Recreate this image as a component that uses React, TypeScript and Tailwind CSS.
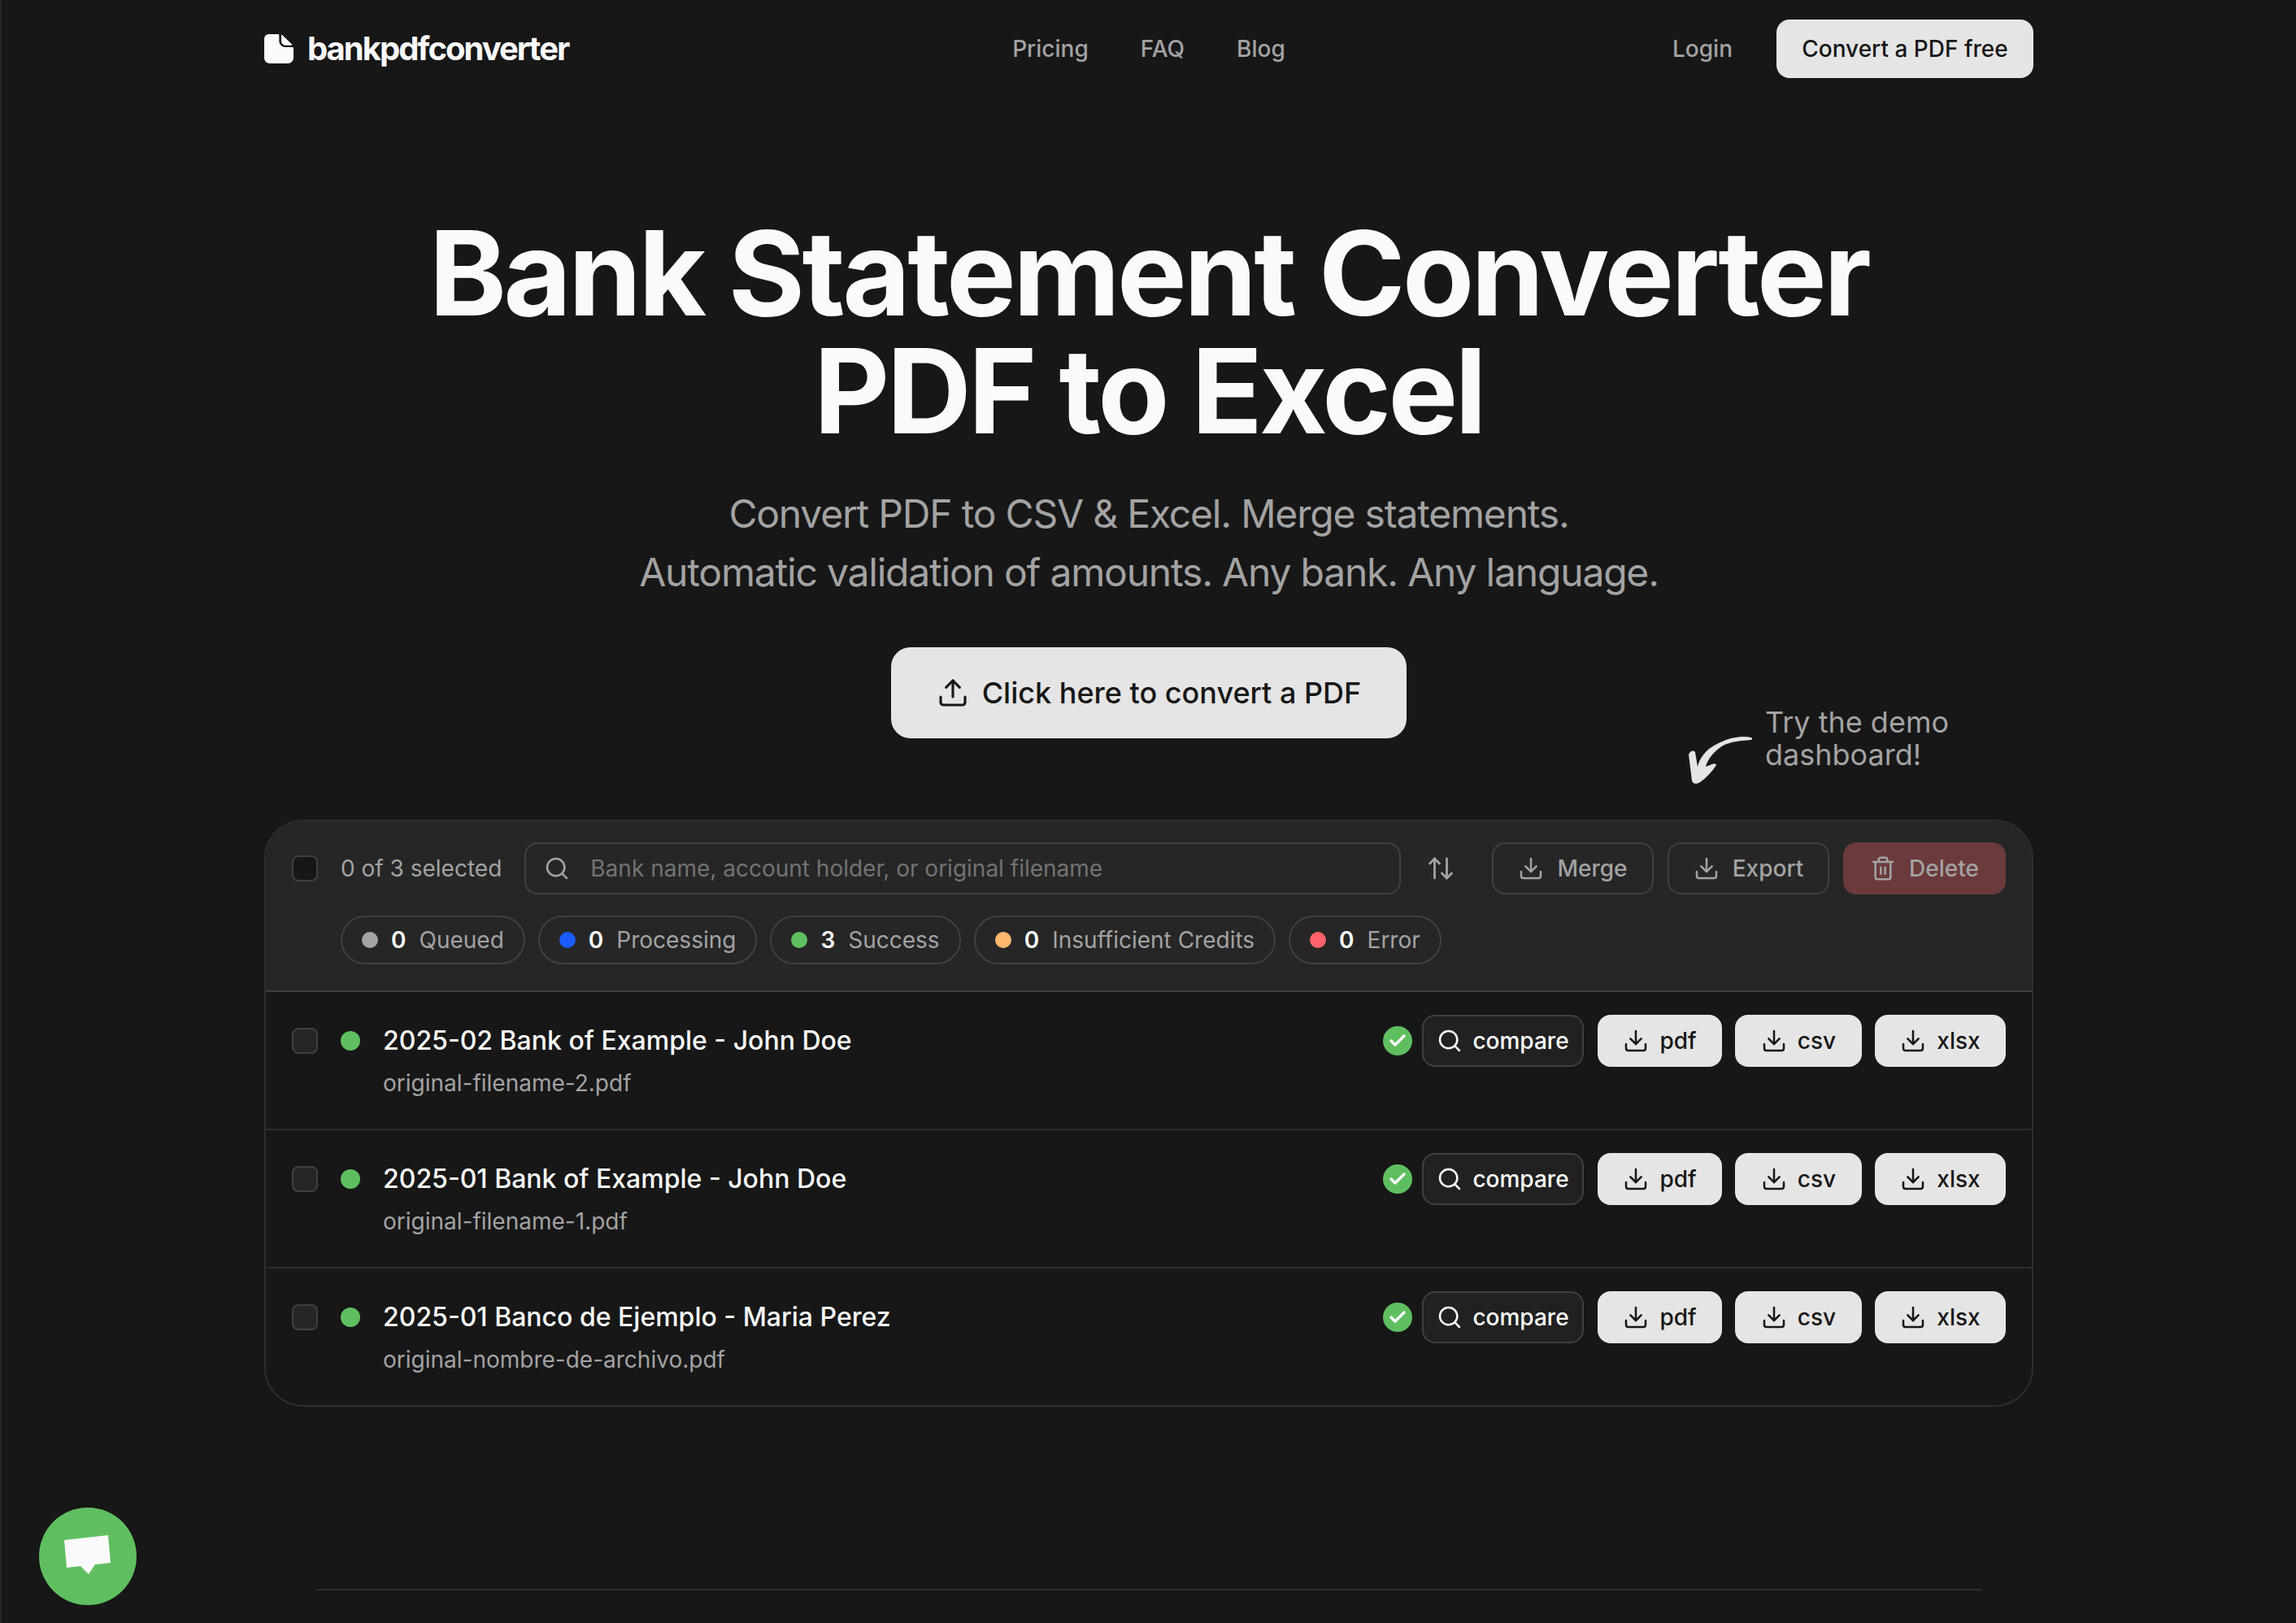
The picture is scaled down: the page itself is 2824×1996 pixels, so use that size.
import { ArrowUpDown, Check, Download, Search, Trash2, Upload } from "lucide-react";

const statuses = [
	{ label: "Queued", count: 0, dot: "bg-[#a3a3a3]" },
	{ label: "Processing", count: 0, dot: "bg-[#1a5cff]" },
	{ label: "Success", count: 3, dot: "bg-[#5fbf60]" },
	{ label: "Insufficient Credits", count: 0, dot: "bg-[#ffb86c]" },
	{ label: "Error", count: 0, dot: "bg-[#ff6369]" },
];

const files = [
	{ title: "2025-02 Bank of Example - John Doe", name: "original-filename-2.pdf" },
	{ title: "2025-01 Bank of Example - John Doe", name: "original-filename-1.pdf" },
	{ title: "2025-01 Banco de Ejemplo - Maria Perez", name: "original-nombre-de-archivo.pdf" },
];

function LogoIcon() {
	return (
		<svg width="36" height="36" viewBox="0 0 36 36" fill="#fafafa">
			<path d="M6 0h11c.8 0 1.3.6 1.3 1.4V8c0 4.6 3.4 8 8 8h8.3c.8 0 1.4.6 1.4 1.4V29c0 4-3 7-7 7H7c-4 0-7-3-7-7V6c0-3.400 2.600-6 6-6Z" />
			<path d="M21 1.500c0-.6.7-.9 1.100-.5l12 11.600c.4.400.1 1.100-.5 1.100H26.500c-3.200 0-5.500-2.300-5.500-5.500Z" />
		</svg>
	);
}

function HandArrow() {
	return (
		<svg width="100" height="80" viewBox="0 0 100 80" fill="#e5e5e5">
			<path d="M95 19C80 16 62 20 43 33 36 39 31 46 29 55L26 37C25 35 20 34 18 40L22 72C23 76 27 77 32 74 39 69 46 62 52 53 51 50 48 51 39 55 41 46 49 36 60 29 70 24 82 23 94 22 96 22 97 20 95 19Z" />
		</svg>
	);
}

function ChatBubble() {
	return (
		<svg width="60" height="52" viewBox="0 0 60 52" fill="#fafafa">
			<path d="M1 6 55 0 58 34 39 36 31 48 21 38 4 40Z" />
		</svg>
	);
}

function ToolbarButton({ label }: { label: string }) {
	return (
		<button className="h-16 w-[199px] flex items-center justify-center gap-4 rounded-2xl border-2 border-[#404040] text-[28px] font-medium text-[#a3a3a3]">
			<Download size={32} strokeWidth={1.9} />
			{label}
		</button>
	);
}

function LightButton({ label, width }: { label: string; width: string }) {
	return (
		<button className={`h-16 ${width} flex items-center justify-center gap-[13px] rounded-2xl bg-[#e5e5e5] text-[28px] font-medium text-[#171717]`}>
			<Download size={32} strokeWidth={1.9} />
			{label}
		</button>
	);
}

export default function App() {
	return (
		<div className="relative min-h-screen bg-[#171717] border-l-2 border-[#262626] font-['Inter',sans-serif] text-[#a3a3a3] overflow-hidden">
			<nav className="mx-auto w-[2176px] h-[120px] grid grid-cols-3 items-center">
				<div className="flex items-center gap-[17px]">
					<LogoIcon />
					<span className="text-[40px] font-bold tracking-[-0.05em] text-[#fafafa]">bankpdfconverter</span>
				</div>
				<div className="flex justify-center gap-16 text-[28px] font-medium">
					<a>Pricing</a>
					<a>FAQ</a>
					<a>Blog</a>
				</div>
				<div className="flex items-center justify-end gap-[54px] text-[28px] font-medium">
					<a>Login</a>
					<button className="h-[72px] w-[316px] rounded-2xl bg-[#e5e5e5] text-[#171717]">Convert a PDF free</button>
				</div>
			</nav>

			<main className="relative flex flex-col items-center pt-[143px]">
				<h1 className="text-[144px] leading-[145px] font-bold tracking-[-0.025em] text-[#fafafa] text-center">
					Bank Statement Converter
					<br />
					PDF to Excel
				</h1>
				<p className="mt-[43px] text-[48px] leading-[72px] tracking-[-0.025em] text-center">
					Convert PDF to CSV &amp; Excel. Merge statements.
					<br />
					Automatic validation of amounts. Any bank. Any language.
				</p>
				<button className="mt-[56px] h-[112px] w-[634px] flex items-center justify-center gap-4 rounded-3xl bg-[#e5e5e5] text-[36px] font-medium text-[#171717]">
					<Upload size={40} strokeWidth={1.9} />
					Click here to convert a PDF
				</button>

				<div className="absolute left-[2057px] top-[768px] flex items-start">
					<HandArrow />
					<p className="ml-[12px] -mt-[20px] text-[36px] leading-[40px]">
						Try the demo
						<br />
						dashboard!
					</p>
				</div>

				<section className="mt-[100px] w-[2176px] rounded-[48px] border-2 border-[#2e2e2e] overflow-hidden">
					<header className="bg-[#262626] border-b-2 border-[#404040] pl-[32px] pr-[32px] pt-[26px] pb-[32px]">
						<div className="flex items-center h-16">
							<div className="h-8 w-8 rounded-lg bg-[#171717] border-2 border-[#404040]" />
							<span className="ml-[28px] text-[28px] whitespace-nowrap">0 of 3 selected</span>
							<div className="ml-[28px] h-16 flex-1 flex items-center rounded-2xl border-2 border-[#404040] pl-[22px]">
								<Search size={32} strokeWidth={1.9} />
								<span className="ml-[25px] text-[28px] text-[#737373]">Bank name, account holder, or original filename</span>
							</div>
							<div className="ml-[25px] mr-[39px] w-12 flex justify-center">
								<ArrowUpDown size={36} strokeWidth={1.9} />
							</div>
							<div className="flex items-center gap-[17px]">
								<ToolbarButton label="Merge" />
								<ToolbarButton label="Export" />
								<button className="h-16 w-[200px] flex items-center justify-center gap-4 rounded-2xl bg-[#6b3a3a] text-[28px] font-medium text-[#a3a3a3]">
									<Trash2 size={32} strokeWidth={1.9} />
									Delete
								</button>
							</div>
						</div>
						<div className="mt-[26px] ml-[60px] flex gap-4">
							{statuses.map((s) => (
								<div key={s.label} className="h-[60px] flex items-center rounded-full border-2 border-[#404040] px-[24px] text-[28px]">
									<span className={`h-5 w-5 rounded-full ${s.dot}`} />
									<span className="ml-4 font-semibold text-[#fafafa]">{s.count}</span>
									<span className="ml-4">{s.label}</span>
								</div>
							))}
						</div>
					</header>

					{files.map((f, i) => (
						<div key={f.name} className={`flex items-start pl-[32px] pr-[32px] pt-[28px] ${i < files.length - 1 ? "h-[170px] border-b-2 border-[#2e2e2e]" : "h-[168px]"}`}>
							<div className="h-16 flex items-center">
								<div className="h-8 w-8 rounded-lg bg-[#262626] border-2 border-[#404040]" />
								<span className="ml-[28px] h-6 w-6 rounded-full bg-[#5fbf60]" />
							</div>
							<div className="ml-[28px] flex-1">
								<div className="text-[32px] leading-[64px] font-medium text-[#fafafa]">{f.title}</div>
								<div className="text-[28px] leading-[40px] text-[#a3a3a3]">{f.name}</div>
							</div>
							<div className="flex items-center h-16">
								<span className="mr-3 h-9 w-9 rounded-full bg-[#5fbf60] flex items-center justify-center text-[#fafafa]">
									<Check size={24} strokeWidth={3.5} />
								</span>
								<button className="h-16 w-[199px] flex items-center justify-center gap-[12px] rounded-2xl border-2 border-[#404040] bg-[#212121] text-[28px] font-medium text-[#fafafa] mr-[17px]">
									<Search size={32} strokeWidth={1.9} />
									compare
								</button>
								<div className="flex gap-4">
									<LightButton label="pdf" width="w-[153px]" />
									<LightButton label="csv" width="w-[156px]" />
									<LightButton label="xlsx" width="w-[161px]" />
								</div>
							</div>
						</div>
					))}
				</section>
			</main>

			<div className="mx-auto mt-[224px] w-[2048px] border-t-2 border-[#2e2e2e] h-[40px]" />

			<button className="absolute left-[46px] bottom-[22px] h-[120px] w-[120px] rounded-full bg-[#5fbf60] flex items-center justify-center">
				<ChatBubble />
			</button>
		</div>
	);
}
